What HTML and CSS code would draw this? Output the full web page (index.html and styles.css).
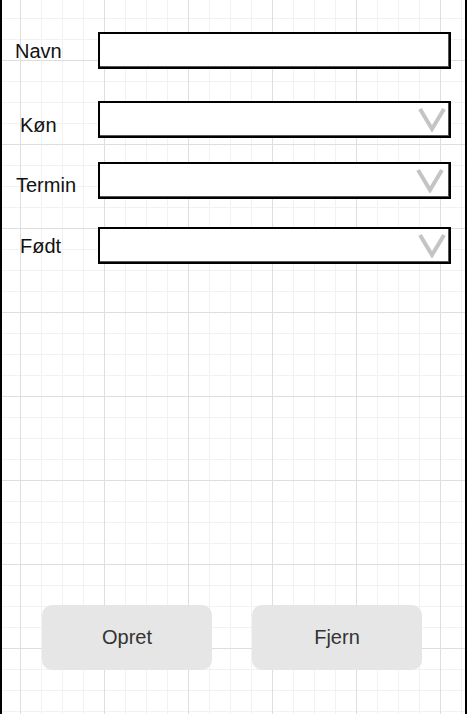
FILE: index.html
```html
<!DOCTYPE html>
<html lang="da">
<head>
<meta charset="utf-8">
<title>Barn</title>
<link rel="stylesheet" href="styles.css">
</head>
<body>
<div class="frame">
  <div class="fields">
    <div class="row row-navn">
      <span class="label label-navn">Navn</span>
      <div class="box"></div>
    </div>
    <div class="row row-kon">
      <span class="label label-kon">Køn</span>
      <div class="box select">
        <svg class="chev" viewBox="0 0 28 25" width="28" height="25"><polyline points="2,2 14,22 26,2" fill="none" stroke="#c4c4c4" stroke-width="4"/></svg>
      </div>
    </div>
    <div class="row row-termin">
      <span class="label label-termin">Termin</span>
      <div class="box select sel-termin">
        <svg class="chev" viewBox="0 0 28 25" width="28" height="25"><polyline points="2,2 14,22 26,2" fill="none" stroke="#c4c4c4" stroke-width="4"/></svg>
      </div>
    </div>
    <div class="row row-fodt">
      <span class="label label-fodt">Født</span>
      <div class="box select">
        <svg class="chev" viewBox="0 0 28 25" width="28" height="25"><polyline points="2,2 14,22 26,2" fill="none" stroke="#c4c4c4" stroke-width="4"/></svg>
      </div>
    </div>
  </div>
  <div class="actions">
    <button class="btn">Opret</button>
    <button class="btn">Fjern</button>
  </div>
</div>
</body>
</html>
```
FILE: styles.css
```css
html, body {
  margin: 0;
  padding: 0;
  background: #fff;
}
body {
  font-family: "Liberation Sans", Arial, sans-serif;
}
.frame {
  box-sizing: border-box;
  width: 467px;
  height: 714px;
  border-left: 2px solid #000;
  border-right: 2px solid #000;
  display: flex;
  flex-direction: column;
  background-color: #fff;
  background-origin: border-box;
  background-image:
    linear-gradient(#dedede 1px, transparent 1px),
    linear-gradient(90deg, #dedede 1px, transparent 1px),
    linear-gradient(#f2f2f2 1px, transparent 1px),
    linear-gradient(90deg, #f2f2f2 1px, transparent 1px);
  background-size: 84px 84px, 84px 84px, 21px 21px, 21px 21px;
  background-position: 20px 60px, 20px 60px, 20px 60px, 20px 60px;
}
.fields {
  display: flex;
  flex-direction: column;
  padding-top: 32px;
}
.row {
  display: flex;
  align-items: flex-start;
}
.row-kon { margin-top: 32px; }
.row-termin { margin-top: 24px; }
.row-fodt { margin-top: 28px; }
.label {
  box-sizing: border-box;
  width: 96px;
  font-size: 20px;
  line-height: 20px;
  color: #111;
}
.label-navn { padding-left: 13px; margin-top: 9px; }
.label-kon { padding-left: 18px; margin-top: 14px; }
.label-termin { padding-left: 14px; margin-top: 13px; }
.label-fodt { padding-left: 18px; margin-top: 9px; }
.box {
  box-sizing: border-box;
  width: 353px;
  height: 37px;
  border: 2px solid #000;
  background: #fff;
  box-shadow: inset -1px -1px 0 #555;
}
.select {
  display: flex;
  justify-content: flex-end;
  align-items: center;
  padding-right: 3px;
}
.sel-termin { padding-right: 5px; }
.chev { display: block; }
.actions {
  margin-top: auto;
  padding: 0 0 44px 40px;
  display: flex;
  gap: 40px;
}
.btn {
  width: 170px;
  height: 65px;
  border: none;
  border-radius: 10px;
  background: #e6e6e6;
  color: #333;
  font-family: "Liberation Sans", Arial, sans-serif;
  font-size: 20px;
  padding: 0;
}
```
